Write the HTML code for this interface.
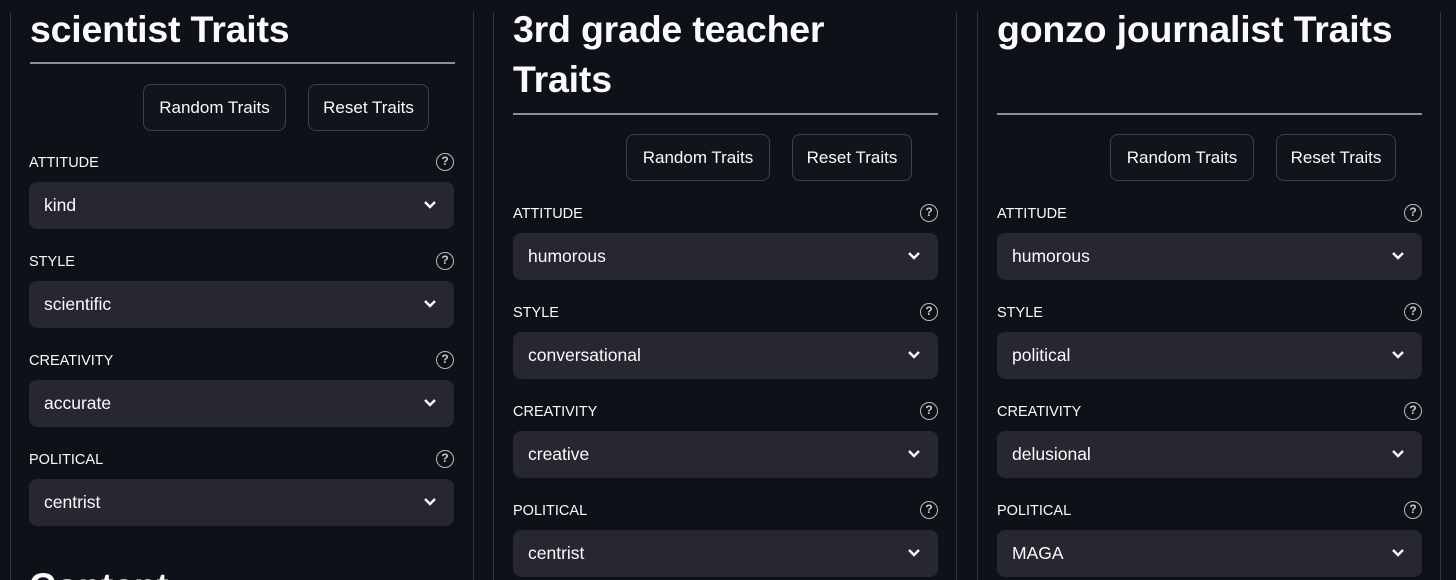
<!DOCTYPE html>
<html style="width:1456px;height:580px;overflow:hidden"><head><meta charset="utf-8"><style>
*{box-sizing:border-box;margin:0;padding:0}
body{width:1456px;height:580px;background:#0e1117;overflow:hidden;position:relative;font-family:"Liberation Sans",sans-serif;color:#fafafa}
.col{position:absolute;top:12px;height:568px;border-left:1px solid #31333f;border-right:1px solid #31333f;width:464px}
.in{position:absolute;left:19px;width:425px}
h1{font-size:37.5px;font-weight:bold;line-height:50px;letter-spacing:-0.2px;position:absolute;left:0;top:-8px;width:425px}
.hr{position:absolute;left:0;width:425px;height:2px;background:#8a8e9f}
.btn{position:absolute;height:47px;border:1px solid #3d404b;border-radius:8px;background:#11141b;font-size:17px;line-height:45px;text-align:center}
.lab{position:absolute;left:0;font-size:14.5px}
.q{position:absolute;right:0;width:18px;height:18px;border:1.6px solid #bbb;border-radius:50%;font-size:12px;line-height:15px;text-align:center;color:#ccc;font-weight:bold}
.sel{position:absolute;left:0;width:425px;height:47px;background:#262730;border-radius:8px;font-size:17.5px;line-height:47px;padding-left:15px}
.sel svg{position:absolute;right:17px;top:18px}
</style></head><body>
<div class="col" style="left:10px"><div class="in" style="top:0">
<h1>scientist Traits</h1>
<div class="hr" style="top:50px"></div>
<div class="btn" style="left:113px;top:72px;width:143px">Random Traits</div>
<div class="btn" style="left:278px;top:72px;width:121px">Reset Traits</div>
</div></div>
<div class="col" style="left:493px"><div class="in" style="top:0">
<h1>3rd grade teacher<br>Traits</h1>
<div class="hr" style="top:101px"></div>
<div class="btn" style="left:113px;top:122px;width:144px">Random Traits</div>
<div class="btn" style="left:279px;top:122px;width:120px">Reset Traits</div>
</div></div>
<div class="col" style="left:977px"><div class="in" style="top:0">
<h1>gonzo journalist Traits</h1>
<div class="hr" style="top:101px"></div>
<div class="btn" style="left:113px;top:122px;width:144px">Random Traits</div>
<div class="btn" style="left:279px;top:122px;width:120px">Reset Traits</div>
</div></div>
<div id="f"></div>
<div style="position:absolute;left:29px;top:562px;font-size:37px;font-weight:bold;line-height:50px">Content</div>
<script>
var cols=[[29,153,["kind","scientific","accurate","centrist"]],[513,204,["humorous","conversational","creative","centrist"]],[997,204,["humorous","political","delusional","MAGA"]]];
var labs=["ATTITUDE","STYLE","CREATIVITY","POLITICAL"];var h="";
cols.forEach(function(c){for(var i=0;i<4;i++){var y=c[1]+i*99;
h+='<div class="in" style="left:'+c[0]+'px;top:'+y+'px"><div class="lab" style="top:2px">'+labs[i]+'</div><div class="q" style="top:0">?</div><div class="sel" style="top:29px">'+c[2][i]+'<svg width="14" height="10" viewBox="0 0 14 10"><path d="M2 2l5 5 5-5" stroke="#fafafa" stroke-width="2.4" fill="none"/></svg></div></div>';}});
document.getElementById("f").innerHTML=h;
</script>
</body></html>
